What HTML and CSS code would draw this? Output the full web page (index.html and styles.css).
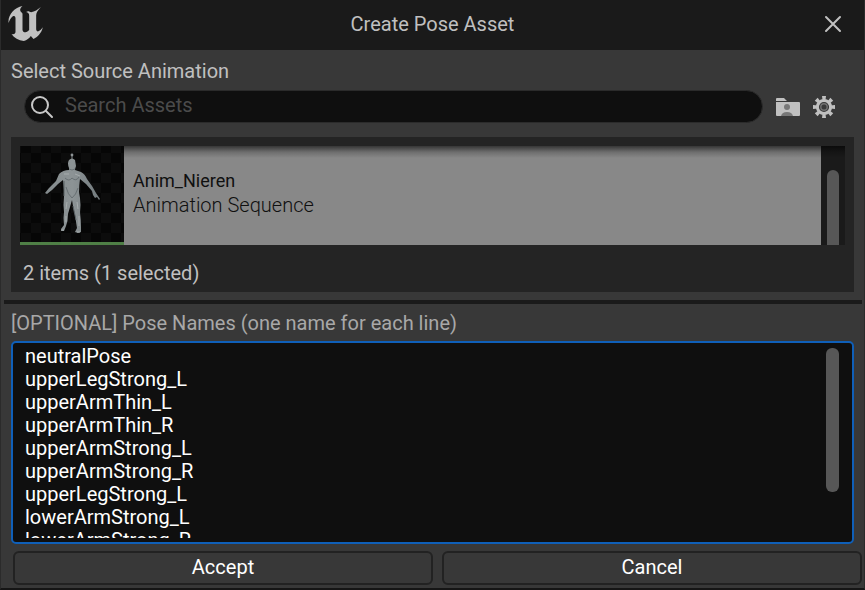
FILE: index.html
```html
<!DOCTYPE html>
<html lang="en">
<head>
<meta charset="utf-8">
<title>Create Pose Asset</title>
<link rel="stylesheet" href="styles.css">
</head>
<body>
<main class="window">
  <header class="titlebar">
    <svg class="logo" viewBox="24 18 104 105" aria-hidden="true">
      <path d="M67 18C60 24 58 30 62 35C64 38 67 38 67 42V89C67 94 71 97 76 97C80 97 84 93 87 90V47C87 41 84 37 78 36C84 31 88 35 93 37C103 35 113 29 122 21C114 31 108 37 108 46V87C108 92 111 95 115 94C120 92 124 87 128 82C124 99 114 110 100 117L92 108C87 115 80 121 71 123C55 121 42 114 34 102C42 104 46 101 46 95V55C46 49 43 46 38 49C32 53 29 60 25 69C23 43 43 23 67 18Z"/>
    </svg>
    <h1 class="title">Create Pose Asset</h1>
    <button class="close" type="button" aria-label="Close">
      <svg viewBox="0 0 16 16" aria-hidden="true"><path d="M1 1L15 15M15 1L1 15"/></svg>
    </button>
  </header>

  <section class="source">
    <label class="caption" for="search">Select Source Animation</label>
    <div class="toolbar">
      <div class="search">
        <svg class="search-icon" viewBox="0 0 24 24" aria-hidden="true"><circle cx="10" cy="10" r="8"/><path d="M16 16L22 22"/></svg>
        <input id="search" type="text" placeholder="Search Assets">
      </div>
      <button class="tool" type="button" aria-label="Show developer content">
        <svg viewBox="0 0 24 24" aria-hidden="true">
          <path class="fill" d="M0 6V4Q0 3 1 3H8L11 6ZM0 7H23Q24 7 24 8V20Q24 21 23 21H1Q0 21 0 20Z"/>
          <circle class="person" cx="11" cy="12" r="3"/>
          <path class="person" d="M5 21Q6 17 11 17Q16 17 17 21Z"/>
        </svg>
      </button>
      <button class="tool" type="button" aria-label="Settings">
        <svg viewBox="0 0 24 24" aria-hidden="true">
          <g class="fill">
            <path id="tooth" d="M10 1H14L13.4 6H10.6Z"/>
            <use href="#tooth" transform="rotate(45 12 12)"/>
            <use href="#tooth" transform="rotate(90 12 12)"/>
            <use href="#tooth" transform="rotate(135 12 12)"/>
            <use href="#tooth" transform="rotate(180 12 12)"/>
            <use href="#tooth" transform="rotate(225 12 12)"/>
            <use href="#tooth" transform="rotate(270 12 12)"/>
            <use href="#tooth" transform="rotate(315 12 12)"/>
          </g>
          <circle class="gear-ring" cx="12" cy="12" r="6.6"/>
          <circle class="gear-hub" cx="12" cy="12" r="3.2"/>
        </svg>
      </button>
    </div>

    <div class="assets">
      <div class="list">
        <div class="asset">
          <svg class="thumb" viewBox="0 0 104 96" aria-hidden="true">
            <defs>
              <pattern id="checks" width="20" height="20" x="-9" y="-3" patternUnits="userSpaceOnUse">
                <path fill="#060606" d="M0 0H20V20H0Z"/>
                <path fill="#0c0c0c" d="M0 0H10V10H0ZM10 10H20V20H10Z"/>
              </pattern>
              <linearGradient id="skin" x1="0" y1="0" x2="1" y2="0">
                <stop offset="0" stop-color="#848b8d"/>
                <stop offset="0.5" stop-color="#8c9395"/>
                <stop offset="1" stop-color="#737b7e"/>
              </linearGradient>
            </defs>
            <path fill="url(#checks)" d="M0 0H104V96H0Z"/>
            <path stroke="#7e8587" stroke-width="1" fill="none" d="M52 9V14"/>
            <circle cx="52" cy="9" r="1.4" fill="#8d9395"/>
            <path fill="url(#skin)" d="M49 14Q52 11 55 14L56 20Q55 23 55 24L61 26Q65 28 67 33L72 40L76 47L80 53L79 54L77 51L75 52L73 49L72 45L66 38L60 33Q59 39 59 46L60 52Q61 59 60 66Q61 74 61 81L61 86L58 87L55 86L57 82Q56 76 55 69Q53 61 52 54Q50 61 48 68Q48 75 46 80L44 85L41 85L41 83L44 79Q43 72 44 66Q43 59 44 51L44 44L43 34L38 38L32 44L27 48L25 47L29 42L36 35L39 28Q43 24 49 24L49 22Q47 17 49 14Z"/>
            <path fill="none" stroke="#687073" stroke-width="1" d="M45 32Q49 36 52 32Q56 36 59 31M46 41Q48 49 52 52Q56 49 58 42M49 23Q52 25 55 23"/>
            <path fill="none" stroke="#a6acad" stroke-width="1" d="M44 28L49 28M55 28L60 30M47 56L46 63M57 56L58 63M46 70V76M59 70V80M42 84H44M57 86H60"/>
            <path fill="none" stroke="#5a6265" stroke-width="1" d="M44 35V50M53 60L56 74"/>
          </svg>
          <div class="asset-text">
            <div class="asset-name">Anim_Nieren</div>
            <div class="asset-type">Animation Sequence</div>
          </div>
        </div>
        <div class="list-track"><div class="list-grip"></div></div>
      </div>
      <p class="count">2 items (1 selected)</p>
    </div>
  </section>

  <hr class="splitter">

  <section class="poses">
    <label class="caption" for="names">[OPTIONAL] Pose Names (one name for each line)</label>
    <div class="editor">
      <textarea id="names" spellcheck="false">neutralPose
upperLegStrong_L
upperArmThin_L
upperArmThin_R
upperArmStrong_L
upperArmStrong_R
upperLegStrong_L
lowerArmStrong_L
lowerArmStrong_R</textarea>
      <div class="editor-track"><div class="editor-grip"></div></div>
    </div>
  </section>

  <footer class="actions">
    <button type="button">Accept</button>
    <button type="button">Cancel</button>
  </footer>
</main>
</body>
</html>
```

FILE: styles.css
```css
* {
  box-sizing: border-box;
}

body {
  margin: 0;
  background: #383838;
  color: #c0c0c0;
  font: 20px/24px Roboto, "Liberation Sans", sans-serif;
}

button,
input,
textarea {
  margin: 0;
  padding: 0;
  border: 0;
  background: none;
  color: inherit;
  font: inherit;
  outline: 0;
}

svg {
  display: block;
}

.window {
  display: flex;
  flex-direction: column;
  height: 100vh;
  min-height: 480px;
  border: 1px solid #2b2b2b;
  border-top: 0;
  border-bottom: 2px solid #151515;
}

.titlebar {
  display: grid;
  grid-template-columns: 48px 1fr 48px;
  align-items: center;
  height: 50px;
  flex: none;
  padding-bottom: 2px;
  background: #1a1a1a;
}

.logo {
  width: 35px;
  height: 35px;
  margin: 0 0 2px 7px;
  fill: #c0c0c0;
}

.title {
  margin: 0;
  font-size: 20px;
  font-weight: 400;
  text-align: center;
}

.close {
  display: grid;
  place-items: center;
  width: 34px;
  height: 32px;
}

.close svg {
  width: 16px;
  height: 16px;
  overflow: visible;
  fill: none;
  stroke: #c0c0c0;
  stroke-width: 2;
  stroke-linecap: round;
}

.source {
  flex: none;
  padding: 9px 10px 8px;
}

.caption {
  display: block;
}

.toolbar {
  display: flex;
  align-items: center;
  gap: 12px;
  margin: 7px 18px 14px 13px;
}

.search {
  display: flex;
  flex: 1;
  align-items: center;
  gap: 11px;
  height: 33px;
  margin-right: 1px;
  padding: 0 5px;
  border: 1px solid #2b2b2b;
  border-radius: 17px;
  background: #0f0f0f;
}

.search-icon {
  width: 24px;
  height: 24px;
  flex: none;
  fill: none;
  stroke: #c8c8c8;
  stroke-width: 2;
  stroke-linecap: round;
}

.search input {
  flex: 1;
  min-width: 0;
  height: 24px;
  margin-bottom: 4px;
}

.search input::placeholder {
  color: #4b4b4b;
  opacity: 1;
}

.tool svg {
  width: 24px;
  height: 24px;
}

.fill {
  fill: #c0c0c0;
}

.person {
  fill: #777777;
}

.gear-ring {
  fill: #383838;
  stroke: #c0c0c0;
  stroke-width: 3;
}

.gear-hub {
  fill: #383838;
  stroke: #707070;
  stroke-width: 1.4;
}

.assets {
  padding: 9px 9px 7px;
  background: #242424;
}

.list {
  position: relative;
  display: flex;
  height: 99px;
  overflow: hidden;
}

.list::before {
  position: absolute;
  inset: 0 0 auto 104px;
  height: 12px;
  background: linear-gradient(rgb(0 0 0 / 60%), rgb(0 0 0 / 20%) 50%, transparent);
  content: "";
}

.asset {
  display: flex;
  flex: 1;
  background: #888888;
  color: #101010;
}

.thumb {
  width: 104px;
  height: 99px;
  border-bottom: 3px solid #4f7f46;
  background: #070707;
}

.asset-text {
  padding: 23px 9px;
}

.asset-name {
  font-size: 18px;
}

.asset-type {
  font-weight: 300;
}

.list-track {
  width: 24px;
  padding: 24px 6px 0;
  background: #1a1a1a;
}

.list-grip {
  height: 100%;
  border-radius: 6px 6px 0 0;
  background: #575757;
}

.count {
  margin: 16px 3px 0;
}

.splitter {
  flex: none;
  height: 4px;
  margin: 0 2px 0 3px;
  border: 0;
  background: #1a1a1a;
}

.poses {
  display: flex;
  flex: 1;
  flex-direction: column;
  min-height: 0;
  padding: 7px 10px;
}

.poses .caption {
  color: #a8a8a8;
}

.editor {
  display: flex;
  flex: 1;
  min-height: 0;
  margin-top: 6px;
  padding: 2px 13px 4px 12px;
  border: 2px solid #0f5fb8;
  border-radius: 5px;
  background: #0f0f0f;
}

.editor textarea {
  flex: 1;
  min-width: 0;
  overflow: hidden;
  color: #ffffff;
  line-height: 23px;
  resize: none;
}

.editor-track {
  width: 13px;
  padding-top: 3px;
}

.editor-grip {
  height: 76%;
  border-radius: 6px;
  background: #575757;
}

.actions {
  display: grid;
  flex: none;
  grid-template-columns: 1fr 1fr;
  gap: 9px;
  padding: 0 2px 3px 12px;
}

.actions button {
  height: 34px;
  padding-bottom: 2px;
  border: 2px solid #222222;
  border-radius: 6px;
  background: #383838;
  color: #ffffff;
}
```
